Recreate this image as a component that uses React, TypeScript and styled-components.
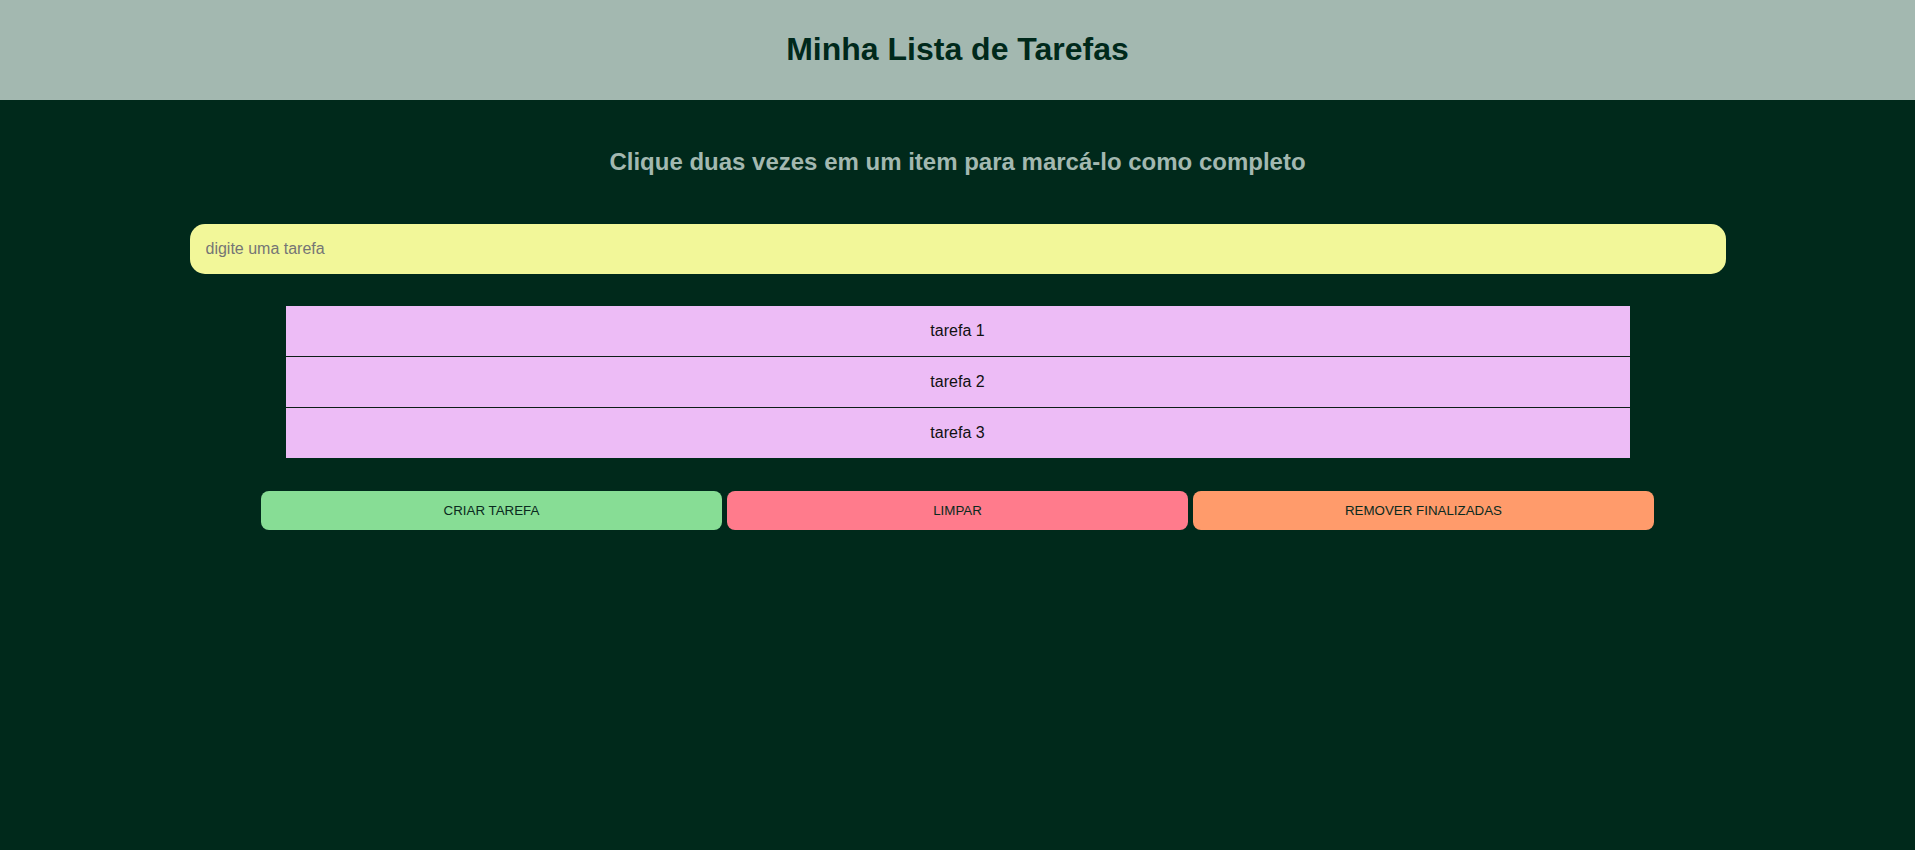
import React from "react";
import styled, { createGlobalStyle } from "styled-components";

const GlobalStyle = createGlobalStyle`
  html, body {
    margin: 0;
    padding: 0;
    background: #00291b;
    font-family: "Liberation Sans", Arial, sans-serif;
  }
  #root {
    min-height: 100vh;
    background: #00291b;
  }
`;

const Header = styled.header`
  height: 100px;
  background: #a3b8b0;
  display: flex;
  align-items: center;
  justify-content: center;
  padding-bottom: 2px;
  box-sizing: border-box;
`;

const Title = styled.h1`
  margin: 0;
  font-size: 32px;
  font-weight: 700;
  color: #00291b;
`;

const Main = styled.main`
  display: flex;
  flex-direction: column;
  align-items: center;
  padding-top: 48px;
`;

const Subtitle = styled.h2`
  margin: 0 0 48px;
  font-size: 24px;
  font-weight: 700;
  color: #a3b8b0;
  text-align: center;
`;

const TaskInput = styled.input`
  width: 1536px;
  height: 50px;
  box-sizing: border-box;
  border: none;
  outline: none;
  border-radius: 15px;
  background: #f2f799;
  padding: 0 16px;
  font-family: "Liberation Sans", Arial, sans-serif;
  font-size: 16px;
  color: #222;
  &::placeholder {
    color: #757575;
  }
`;

const List = styled.ul`
  list-style: none;
  margin: 32px 0 0;
  padding: 0;
  width: 1344px;
`;

const Item = styled.li<{ $done?: boolean }>`
  height: 50px;
  display: flex;
  align-items: center;
  justify-content: center;
  background: #edbcf6;
  color: #111;
  font-size: 16px;
  cursor: pointer;
  user-select: none;
  text-decoration: ${(p) => (p.$done ? "line-through" : "none")};
  & + & {
    border-top: 1px solid #0d1f17;
  }
`;

const ButtonRow = styled.div`
  display: flex;
  gap: 5px;
  margin-top: 33px;
`;

const ActionButton = styled.button<{ $bg: string }>`
  width: 461px;
  height: 39px;
  border: none;
  border-radius: 8px;
  background: ${(p) => p.$bg};
  color: #0a2a20;
  font-family: "Liberation Sans", Arial, sans-serif;
  font-size: 13.33px;
  text-transform: uppercase;
  cursor: pointer;
`;

export default function App() {
  const [tasks, setTasks] = React.useState([
    { text: "tarefa 1", done: false },
    { text: "tarefa 2", done: false },
    { text: "tarefa 3", done: false },
  ]);
  const [value, setValue] = React.useState("");

  const add = () => {
    if (!value.trim()) return;
    setTasks([...tasks, { text: value.trim(), done: false }]);
    setValue("");
  };

  return (
    <>
      <GlobalStyle />
      <Header>
        <Title>Minha Lista de Tarefas</Title>
      </Header>
      <Main>
        <Subtitle>Clique duas vezes em um item para marcá-lo como completo</Subtitle>
        <TaskInput
          placeholder="digite uma tarefa"
          value={value}
          onChange={(e) => setValue(e.target.value)}
          onKeyDown={(e) => e.key === "Enter" && add()}
        />
        <List>
          {tasks.map((t, i) => (
            <Item
              key={i}
              $done={t.done}
              onDoubleClick={() =>
                setTasks(tasks.map((x, j) => (j === i ? { ...x, done: !x.done } : x)))
              }
            >
              {t.text}
            </Item>
          ))}
        </List>
        <ButtonRow>
          <ActionButton $bg="#87dd95" onClick={add}>Criar tarefa</ActionButton>
          <ActionButton $bg="#ff7b8c" onClick={() => setTasks([])}>Limpar</ActionButton>
          <ActionButton $bg="#ff9b6b" onClick={() => setTasks(tasks.filter((t) => !t.done))}>
            Remover finalizadas
          </ActionButton>
        </ButtonRow>
      </Main>
    </>
  );
}
